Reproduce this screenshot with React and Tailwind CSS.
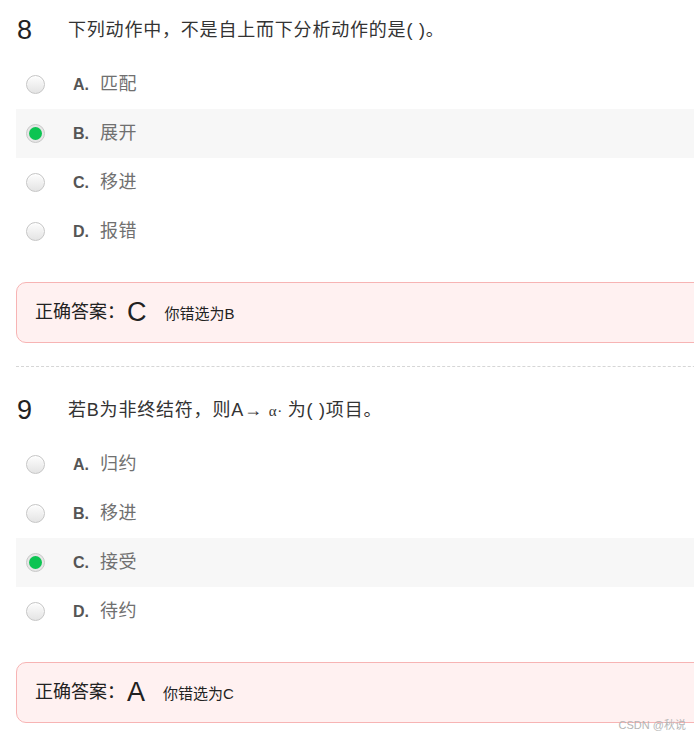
import React from 'react';

const questions = [
  {
    no: '8',
    title: '下列动作中，不是自上而下分析动作的是( )。',
    options: [
      ['A', '匹配'],
      ['B', '展开'],
      ['C', '移进'],
      ['D', '报错'],
    ],
    picked: 'B',
    answer: 'C',
  },
  {
    no: '9',
    title: (
      <>
        若B为非终结符，则A→ <span className="font-['Liberation_Serif',serif] text-[15px]">α· </span> 为( )项目。
      </>
    ),
    options: [
      ['A', '归约'],
      ['B', '移进'],
      ['C', '接受'],
      ['D', '待约'],
    ],
    picked: 'C',
    answer: 'A',
  },
];

function Radio({ checked }) {
  if (checked) {
    return (
      <span className="flex h-[19px] w-[19px] items-center justify-center rounded-full border border-[#c9c9c9] bg-[#e6e6e6]">
        <span className="h-[13px] w-[13px] rounded-full bg-[#0cc452]" />
      </span>
    );
  }
  return (
    <span className="h-[19px] w-[19px] rounded-full border border-[#c6c6c6] bg-gradient-to-b from-[#fdfdfd] to-[#e4e4e4] shadow-[inset_0_1px_1px_rgba(255,255,255,0.9)]" />
  );
}

function Question({ q, first }) {
  return (
    <div className={first ? '' : 'mt-[23px] border-t border-dashed border-[#d6d6d6] pt-[13px]'}>
      <div className="flex h-[60px] items-center">
        <span className="w-[52px] pl-px text-[27px] leading-none text-[#222]">{q.no}</span>
        <span className="text-[18px] tracking-[0.8px] text-[#333]">{q.title}</span>
      </div>
      {q.options.map(([key, text]) => (
        <div
          key={key}
          className={`flex h-[49px] items-center pl-[10px] ${q.picked === key ? 'bg-[#f7f7f7]' : ''}`}
        >
          <Radio checked={q.picked === key} />
          <span className="ml-[28px] w-[27px] text-[16px] font-bold text-[#555]">{key}.</span>
          <span className="text-[18px] tracking-[0.5px] text-[#707070]">{text}</span>
        </div>
      ))}
      <div className="mt-[26px] flex h-[61px] items-center rounded-[10px] border border-[#f7b4b4] bg-[#fff1f1] pl-[18px]">
        <span className="text-[18px] text-[#222]">正确答案：</span>
        <span className="ml-[2px] text-[27px] leading-none text-[#222]">{q.answer}</span>
        <span className="ml-[18px] mt-[3px] text-[15px] text-[#222]">你错选为{q.picked}</span>
      </div>
    </div>
  );
}

export default function App() {
  return (
    <div className="relative h-[739px] w-[694px] overflow-hidden bg-white font-['Liberation_Sans','Noto_Sans_CJK_SC',sans-serif]">
      <div className="ml-4 w-[740px]">
        {questions.map((q, i) => (
          <Question key={q.no} q={q} first={i === 0} />
        ))}
      </div>
      <span className="absolute bottom-[6px] right-[8px] text-[11px] text-[#b5b5b5]">CSDN @秋说</span>
    </div>
  );
}
